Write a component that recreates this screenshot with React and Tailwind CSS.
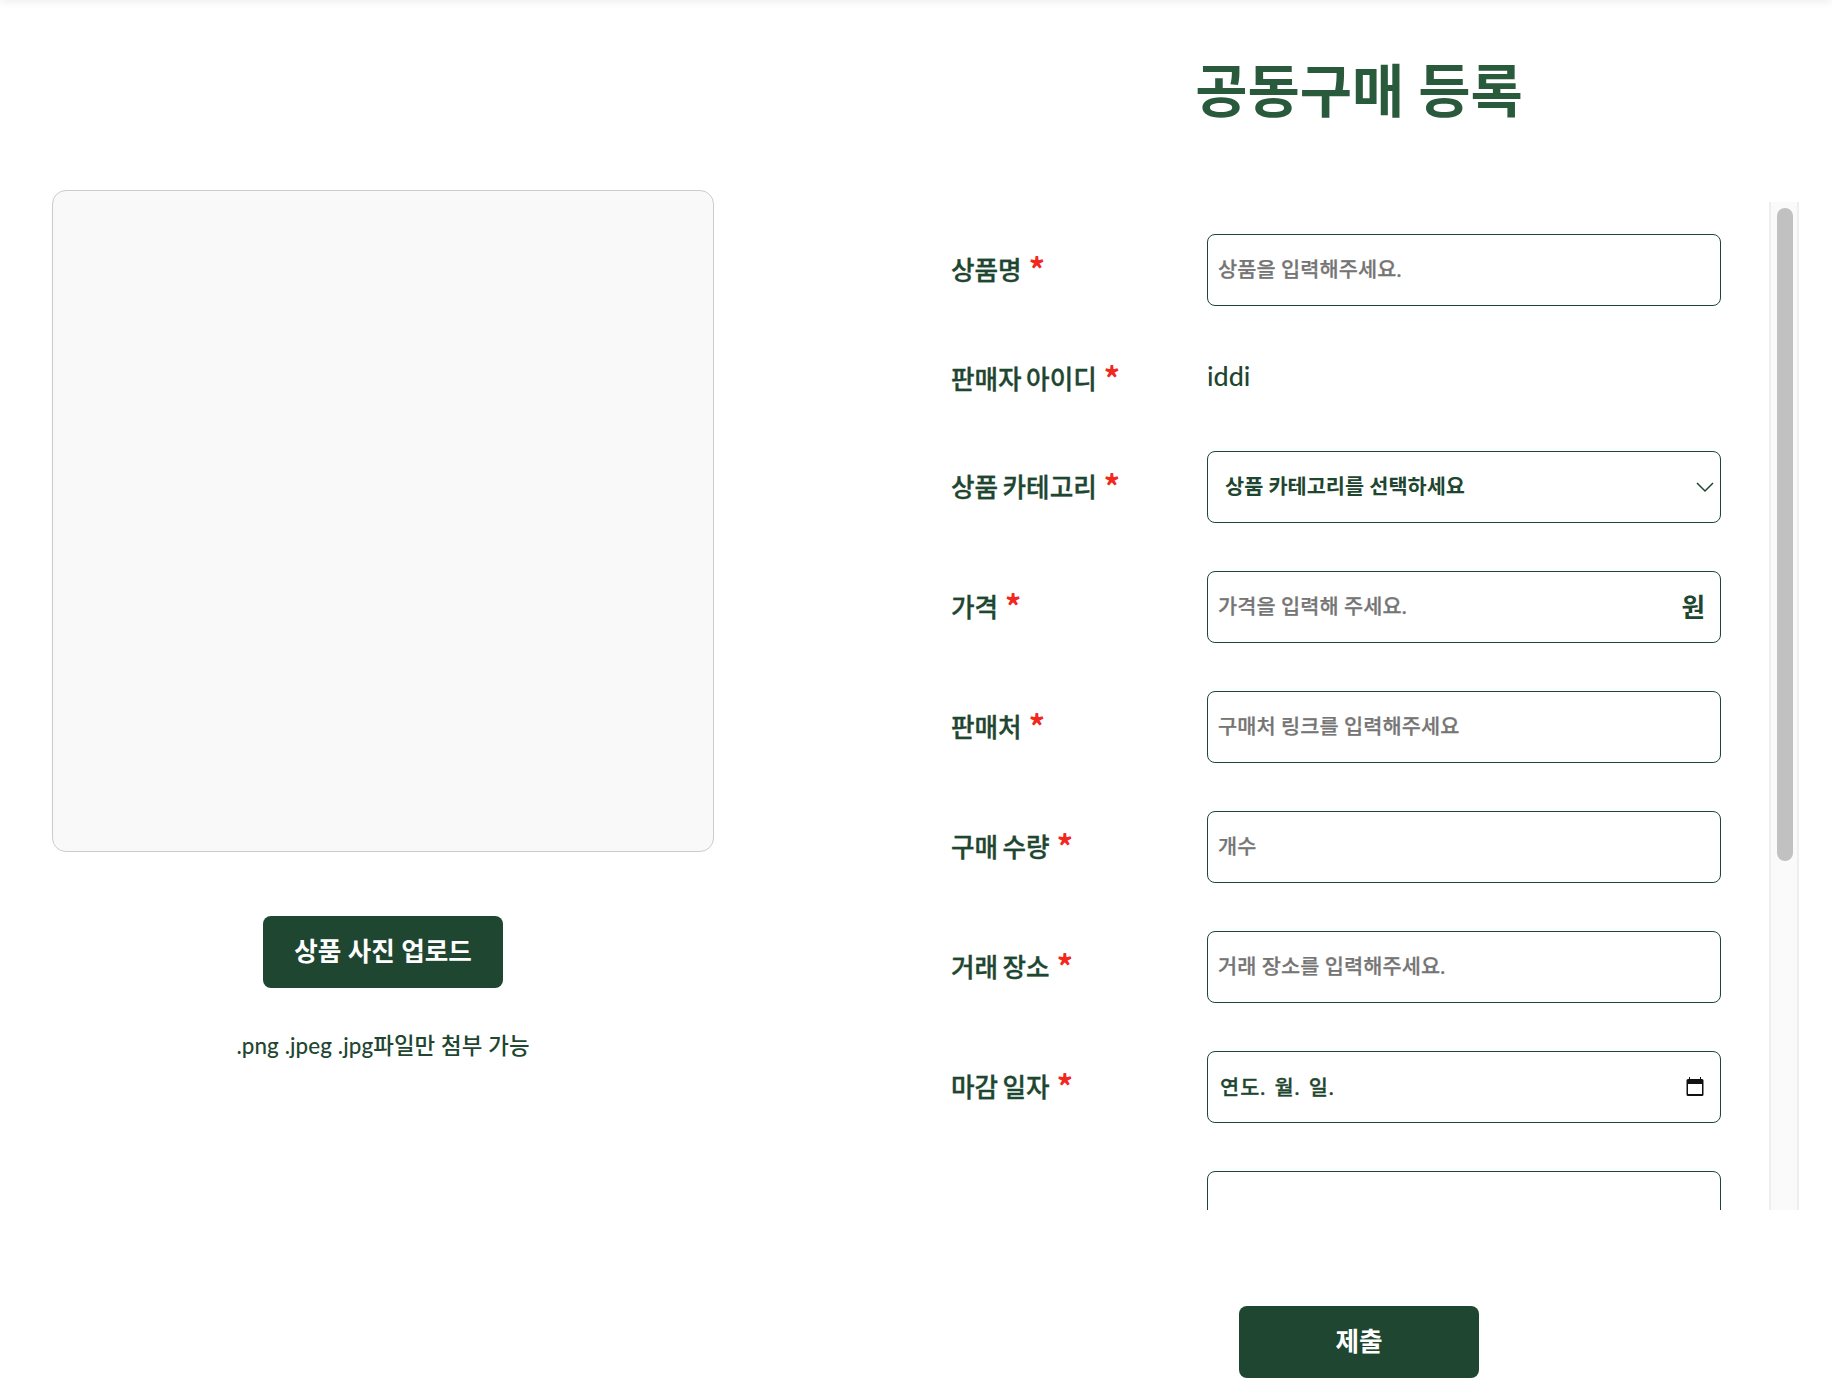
const inputBox = "h-[72px] w-[514px] shrink-0 rounded-[8px] border border-[#1e4630] bg-white flex items-center";
const ph = "w-full h-full bg-transparent outline-none pl-[10px] pr-[11px] pb-[4px] text-[20.8px] tracking-[0.1px] font-medium [-webkit-text-stroke:0.25px] text-[#1e4630] placeholder:text-[#757575]";

function Label({ children, star = true }) {
  return (
    <div className="w-[257px] shrink-0 flex items-start pl-[1px] text-[25.6px] font-medium [-webkit-text-stroke:0.35px] [word-spacing:-2px] leading-[30px] text-[#1e4630]">
      <span>{children}</span>
      {star && <span className="ml-[7px] -mt-[2px] font-['Noto_Sans_CJK_KR'] text-[32px] leading-[30px] font-bold [-webkit-text-stroke:0] text-[#f0281e]">*</span>}
    </div>
  );
}

function Row({ label, star, children }) {
  return (
    <div className="flex shrink-0 items-center">
      <Label star={star}>{label}</Label>
      {children}
    </div>
  );
}

function TextRow({ label, placeholder }) {
  return (
    <Row label={label}>
      <div className={inputBox}>
        <input className={ph} placeholder={placeholder} />
      </div>
    </Row>
  );
}

export default function App() {
  return (
    <div className="relative h-[1386px] w-[1832px] overflow-hidden bg-white font-['Lato','Noto_Sans_CJK_KR',sans-serif]">
      <div className="absolute left-0 right-0 -top-[4px] h-[4px] shadow-[0_0_8px_rgba(0,0,0,0.14)]" />
      <div className="flex h-full pl-[52px]">
        <div className="w-[662px] shrink-0 pt-[190px] flex flex-col items-center">
          <div className="h-[662px] w-[662px] rounded-[14px] border border-[#cccccc] bg-[#f9f9f9]" />
          <button className="mt-[64px] h-[72px] w-[240px] rounded-[8px] bg-[#1e4630] pb-[2px] text-[25.6px] font-semibold text-white">상품 사진 업로드</button>
          <p className="mt-[43px] text-[22.4px] leading-[30px] text-[#1e4630] font-medium tracking-[0.1px]">.png .jpeg .jpg파일만 첨부 가능</p>
        </div>
        <div className="ml-[206px] w-[878px] shrink-0 flex flex-col items-center">
          <h1 className="mt-[50px] h-[80px] text-[56.8px] leading-[80px] font-bold text-[#2a5a3c]">공동구매 등록</h1>
          <div className="mt-[72px] h-[1008px] w-[879px] shrink-0 self-start flex overflow-hidden">
            <div className="flex-1 pl-[30px] pt-[32px] flex flex-col gap-[48px]">
              <TextRow label="상품명" placeholder="상품을 입력해주세요." />
              <div className="flex shrink-0 items-center h-[49px]">
                <Label>판매자 아이디</Label>
                <span className="text-[26.9px] font-medium text-[#1e4630] -mt-[5px]">iddi</span>
              </div>
              <Row label="상품 카테고리">
                <div className={inputBox + " justify-between pl-[17px] pr-[5px] text-[20.8px] font-semibold text-[#1e4630]"}>
                  <span className="-mt-[2px]">상품 카테고리를 선택하세요</span>
                  <svg width="20" height="12" viewBox="0 0 20 12" fill="none" stroke="#1e4630" strokeWidth="1.5"><path d="M2 2l8 8 8-8" /></svg>
                </div>
              </Row>
              <Row label="가격">
                <div className={inputBox + " pr-[15px]"}>
                  <input className={ph} placeholder="가격을 입력해 주세요." />
                  <span className="shrink-0 text-[25.6px] font-semibold text-[#1e4630]">원</span>
                </div>
              </Row>
              <TextRow label="판매처" placeholder="구매처 링크를 입력해주세요" />
              <TextRow label="구매 수량" placeholder="개수" />
              <TextRow label="거래 장소" placeholder="거래 장소를 입력해주세요." />
              <Row label="마감 일자">
                <div className={inputBox + " justify-between pl-[12px] pr-[16px] text-[20.8px] font-medium [-webkit-text-stroke:0.3px] text-[#1e4630]"}>
                  <span className="tracking-[1px] [word-spacing:2px]">연도. 월. 일.</span>
                  <svg width="18" height="20" viewBox="0 0 18 20"><path d="M4 0v2h10V0h1v2h1a1.5 1.5 0 0 1 1.5 1.5v14A1.5 1.5 0 0 1 16 19H2a1.5 1.5 0 0 1-1.5-1.5v-14A1.5 1.5 0 0 1 2 2h1V0z M2 7v10h14V7z" fill="#111" fillRule="evenodd" /></svg>
                </div>
              </Row>
              <Row label="" star={false}>
                <div className={inputBox} />
              </Row>
            </div>
            <div className="w-[30px] shrink-0 border-x-2 border-[#eeeeee] bg-[#fafafa] pl-[6px] pt-[6px]">
              <div className="h-[653px] w-[16px] rounded-[8px] bg-[#c1c1c1]" />
            </div>
          </div>
          <button className="mt-[96px] h-[72px] w-[240px] rounded-[8px] bg-[#1e4630] pb-[2px] text-[25.6px] font-semibold text-white">제출</button>
        </div>
      </div>
    </div>
  );
}
